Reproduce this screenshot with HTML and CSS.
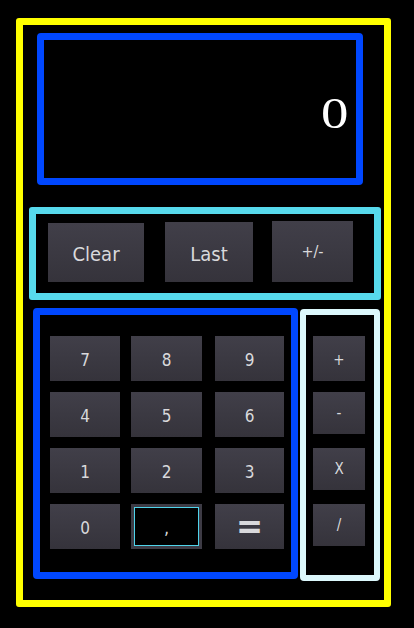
FILE: index.html
```html
<!DOCTYPE html>
<html lang="en">
<head>
<meta charset="utf-8">
<title>Calculator</title>
<link rel="stylesheet" href="styles.css">
</head>
<body>
<div class="calc">
  <div class="display"><span class="readout">0</span></div>
  <div class="funcs">
    <button class="key fkey k-clear">Clear</button>
    <button class="key fkey k-last">Last</button>
    <button class="key fkey k-sign">+/-</button>
  </div>
  <div class="lower">
    <div class="numpad">
      <button class="key nkey">7</button>
      <button class="key nkey">8</button>
      <button class="key nkey">9</button>
      <button class="key nkey">4</button>
      <button class="key nkey">5</button>
      <button class="key nkey">6</button>
      <button class="key nkey">1</button>
      <button class="key nkey">2</button>
      <button class="key nkey">3</button>
      <button class="key nkey">0</button>
      <button class="key nkey comma">,</button>
      <button class="key nkey equals">=</button>
    </div>
    <div class="ops">
      <button class="key okey first">+</button>
      <button class="key okey">-</button>
      <button class="key okey">X</button>
      <button class="key okey">/</button>
    </div>
  </div>
</div>
</body>
</html>
```
FILE: styles.css
```css
* { box-sizing: border-box; }
html, body { margin: 0; padding: 0; background: #000; }
body { width: 414px; height: 628px; overflow: hidden; }

.calc {
  margin: 18px 0 0 16px;
  width: 375px;
  height: 589px;
  border: 7px solid #ffff00;
  border-radius: 3px;
  display: flex;
  flex-direction: column;
  align-items: flex-start;
}

.display {
  margin: 8px 0 0 14px;
  width: 326px;
  height: 152px;
  border: 7px solid #0047ff;
  border-radius: 4px;
  display: flex;
  align-items: center;
  justify-content: flex-end;
  padding: 9px 8px 0 0;
}
.readout {
  font-family: "Liberation Serif", "Times New Roman", serif;
  font-size: 45px;
  line-height: 1;
  color: #fff;
  display: inline-block;
  transform: scaleX(1.22);
  transform-origin: right center;
}

.key {
  border: 0;
  margin: 0;
  padding: 0;
  background: linear-gradient(#413f49, #35333b);
  color: #d9d9dc;
  font-family: "DejaVu Sans Condensed", "DejaVu Sans", sans-serif;
  display: flex;
  align-items: center;
  justify-content: center;
}

.funcs {
  margin: 22px 0 0 6px;
  width: 352px;
  height: 93px;
  border: 7px solid #57d9ec;
  border-radius: 3px;
  display: flex;
  align-items: flex-end;
  padding: 0 0 11px 12px;
}
.fkey { font-size: 20px; padding-top: 3px; }
.k-clear { width: 96px; height: 59px; }
.k-last { width: 88px; height: 60px; margin-left: 21px; }
.k-sign { width: 81px; height: 61px; margin-left: 19px; font-size: 16px; padding-top: 0; }

.lower {
  margin: 8px 0 0 10px;
  display: flex;
  align-items: flex-start;
}

.numpad {
  width: 265px;
  height: 271px;
  border: 7px solid #0047ff;
  border-radius: 4px;
  padding: 21px 0 0 10px;
  display: grid;
  grid-template-columns: 70px 71px 71px;
  grid-auto-rows: 45px;
  column-gap: 11px;
  row-gap: 11px;
  align-content: start;
}
.numpad .nkey:nth-child(3n) { margin-left: 2px; }
.nkey { font-size: 17px; padding-top: 2px; }
.comma {
  background: #000;
  border: 3px solid #3d3b45;
  box-shadow: inset 0 0 0 1px #4fd3ea;
  font-size: 18px;
  padding-top: 2px;
}
.equals { font-size: 36px; font-weight: bold; padding-top: 0; padding-bottom: 2px; }

.ops {
  margin: 1px 0 0 2px;
  width: 80px;
  height: 272px;
  border: 6px solid #dcf8fc;
  border-radius: 4px;
  padding: 21px 0 0 7px;
  display: grid;
  grid-template-columns: 52px;
  grid-auto-rows: 45px;
  row-gap: 11px;
  align-content: start;
  align-items: start;
}
.okey { height: 42px; font-size: 15px; }
.okey.first { height: 45px; padding-top: 2px; }
```
